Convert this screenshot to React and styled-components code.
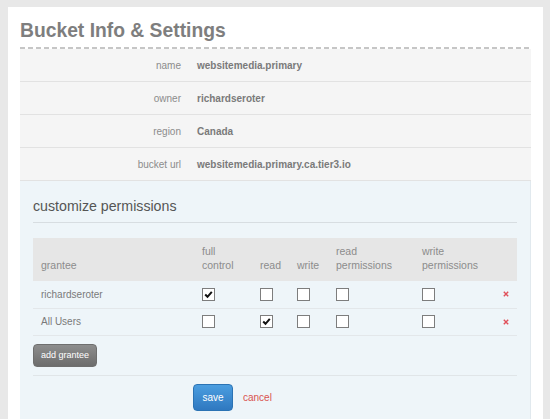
import React from "react";
import styled, { createGlobalStyle } from "styled-components";

const GlobalStyle = createGlobalStyle`
  html, body { margin: 0; padding: 0; }
  body {
    background: #e8e8e8;
    font-family: "Liberation Sans", Arial, sans-serif;
  }
`;

const Page = styled.div`
  padding: 7px 7px 0 8px;
`;

const Panel = styled.div`
  background: #fff;
  padding: 12px 12px 0 12px;
  min-height: 412px;
  box-sizing: border-box;
`;

const Title = styled.h1`
  margin: 0 0 4px 0;
  font-size: 19.3px;
  line-height: 24px;
  font-weight: bold;
  color: #7e7e7e;
`;

const DashedRule = styled.div`
  height: 2px;
  background: repeating-linear-gradient(90deg, #c6c6c6 0 5px, transparent 5px 8px);
`;

const InfoList = styled.div`
  background: #f5f5f5;
`;

const InfoRow = styled.div`
  display: grid;
  grid-template-columns: 161px 1fr;
  column-gap: 16px;
  align-items: center;
  height: 32px;
  border-bottom: 1px solid #e2e2e2;
  font-size: 10px;
`;

const InfoLabel = styled.span`
  text-align: right;
  color: #8c8c8c;
`;

const InfoValue = styled.span`
  font-weight: bold;
  color: #7a7a7a;
`;

const PermSection = styled.div`
  background: #eef5f9;
  border-right: 1px solid #e1e9ee;
  padding: 16px 13px 8px 13px;
`;

const SectionHeading = styled.h2`
  margin: 0 0 15px 0;
  padding-bottom: 7px;
  border-bottom: 1px solid #d7dde1;
  font-size: 14.2px;
  line-height: 18px;
  font-weight: normal;
  color: #555;
`;

const Table = styled.table`
  width: 100%;
  border-collapse: collapse;
  table-layout: fixed;
  font-size: 10px;
`;

const HeadCell = styled.th`
  background: #e6e6e6;
  text-align: left;
  font-weight: normal;
  font-size: 10.5px;
  color: #8c8c8c;
  line-height: 14px;
  vertical-align: bottom;
  padding: 6px 0 9px ${(p) => (p.$narrow ? 6 : 8)}px;
`;

const Row = styled.tr`
  height: 27px;
  border-bottom: 1px solid #e3e7ea;
`;

const Cell = styled.td`
  color: #7a7a7a;
  padding: 0 0 0 ${(p) => (p.$narrow ? 6 : 8)}px;
  vertical-align: middle;
`;

const Box = styled.span`
  display: block;
  width: 11px;
  height: 11px;
  border: 1px solid #7d7d7d;
  background: #fff;
  position: relative;
`;

const Check = styled.svg`
  position: absolute;
  left: 1px;
  top: 1px;
`;

const Remove = styled.svg`
  display: block;
`;

const AddButton = styled.button`
  display: block;
  margin: 8px 0 8px 0;
  width: 64px;
  height: 23px;
  border: 1px solid #6e6e6e;
  border-radius: 4px;
  background: linear-gradient(#8d8d8d, #6c6c6c);
  color: #fff;
  font-family: inherit;
  font-size: 9px;
  padding: 0;
`;

const Divider = styled.div`
  border-top: 1px solid #e0e5e8;
`;

const Actions = styled.div`
  display: flex;
  align-items: center;
  gap: 10px;
  padding: 8px 0 0 160px;
`;

const SaveButton = styled.button`
  width: 40px;
  height: 27px;
  border: 1px solid #2b73b4;
  border-radius: 4px;
  background: linear-gradient(#4b9ee0, #2f78c0);
  color: #fff;
  font-family: inherit;
  font-size: 10px;
  padding: 0;
`;

const CancelLink = styled.a`
  color: #d9534f;
  font-size: 10px;
  text-decoration: none;
`;

const Checkbox = ({ checked }) => (
  <Box>
    {checked && (
      <Check width="9" height="9" viewBox="0 0 9 9">
        <path d="M1.2 4.5 L3.5 6.8 L7.8 1.8" fill="none" stroke="#111" strokeWidth="2" />
      </Check>
    )}
  </Box>
);

const info = [
  ["name", "websitemedia.primary"],
  ["owner", "richardseroter"],
  ["region", "Canada"],
  ["bucket url", "websitemedia.primary.ca.tier3.io"],
];

const grantees = [
  { name: "richardseroter", perms: [true, false, false, false, false] },
  { name: "All Users", perms: [false, true, false, false, false] },
];

export default function App() {
  return (
    <>
      <GlobalStyle />
      <Page>
        <Panel>
          <Title>Bucket Info &amp; Settings</Title>
          <DashedRule />
          <InfoList>
            {info.map(([k, v]) => (
              <InfoRow key={k}>
                <InfoLabel>{k}</InfoLabel>
                <InfoValue>{v}</InfoValue>
              </InfoRow>
            ))}
          </InfoList>
          <PermSection>
            <SectionHeading>customize permissions</SectionHeading>
            <Table>
              <colgroup>
                <col style={{ width: 161 }} />
                <col style={{ width: 58 }} />
                <col style={{ width: 37 }} />
                <col style={{ width: 39 }} />
                <col style={{ width: 86 }} />
                <col style={{ width: 83 }} />
                <col />
              </colgroup>
              <thead>
                <tr>
                  <HeadCell>grantee</HeadCell>
                  <HeadCell>full<br />control</HeadCell>
                  <HeadCell>read</HeadCell>
                  <HeadCell>write</HeadCell>
                  <HeadCell>read<br />permissions</HeadCell>
                  <HeadCell>write<br />permissions</HeadCell>
                  <HeadCell $narrow />
                </tr>
              </thead>
              <tbody>
                {grantees.map((g) => (
                  <Row key={g.name}>
                    <Cell>{g.name}</Cell>
                    {g.perms.map((p, i) => (
                      <Cell key={i}>
                        <Checkbox checked={p} />
                      </Cell>
                    ))}
                    <Cell $narrow>
                      <Remove width="6" height="6" viewBox="0 0 6 6">
                        <path d="M0.8 0.8 L5.2 5.2 M5.2 0.8 L0.8 5.2" stroke="#e0505a" strokeWidth="1.4" />
                      </Remove>
                    </Cell>
                  </Row>
                ))}
              </tbody>
            </Table>
            <AddButton>add grantee</AddButton>
            <Divider />
            <Actions>
              <SaveButton>save</SaveButton>
              <CancelLink href="#">cancel</CancelLink>
            </Actions>
          </PermSection>
        </Panel>
      </Page>
    </>
  );
}
